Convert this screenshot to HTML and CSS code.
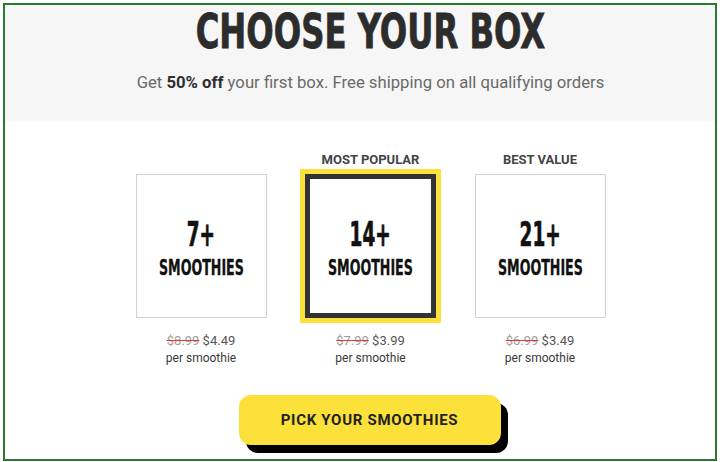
FILE: index.html
```html
<!DOCTYPE html>
<html lang="en">
<head>
<meta charset="utf-8">
<title>Choose your box</title>
<link rel="stylesheet" href="styles.css">
</head>
<body>
<div class="frame">
  <header class="hero">
    <h1 class="title"><span class="title-text">CHOOSE YOUR BOX</span></h1>
    <p class="subtitle">Get <strong>50% off</strong> your first box. Free shipping on all qualifying orders</p>
  </header>
  <main class="plans">
    <div class="plan-row">
      <div class="plan">
        <div class="badge"></div>
        <div class="card">
          <span class="count">7+</span>
          <span class="unit">SMOOTHIES</span>
        </div>
        <div class="price"><s class="old">$8.99</s> <span class="new">$4.49</span></div>
        <div class="per">per smoothie</div>
      </div>
      <div class="plan">
        <div class="badge">MOST POPULAR</div>
        <div class="card card-popular">
          <span class="count">14+</span>
          <span class="unit">SMOOTHIES</span>
        </div>
        <div class="price"><s class="old">$7.99</s> <span class="new">$3.99</span></div>
        <div class="per">per smoothie</div>
      </div>
      <div class="plan">
        <div class="badge">BEST VALUE</div>
        <div class="card">
          <span class="count">21+</span>
          <span class="unit">SMOOTHIES</span>
        </div>
        <div class="price"><s class="old">$6.99</s> <span class="new">$3.49</span></div>
        <div class="per">per smoothie</div>
      </div>
    </div>
    <button class="cta" type="button">PICK YOUR SMOOTHIES</button>
  </main>
</div>
</body>
</html>
```

FILE: styles.css
```css
* { box-sizing: border-box; }

html, body {
  margin: 0;
  padding: 0;
  background: #ffffff;
}

body {
  padding: 3px 3px 1px 3px;
  font-family: Roboto, "Liberation Sans", sans-serif;
}

.frame {
  border: 2px solid #2a7a30;
  height: 458px;
  overflow: hidden;
  background: #ffffff;
}

.hero {
  background: #f6f6f6;
  height: 116px;
  padding: 3px 0 0 21px;
  text-align: center;
}

.title {
  margin: 0;
  font-family: "DejaVu Sans Condensed", "DejaVu Sans", sans-serif;
  font-weight: 700;
  font-size: 47.5px;
  line-height: 48px;
  color: #2c2c2c;
  -webkit-text-stroke: 0.8px #2c2c2c;
}

.title-text {
  display: inline-block;
  transform: scaleX(0.755);
}

.subtitle {
  margin: 17px 0 0;
  font-size: 16.7px;
  line-height: 20px;
  color: #6a6a6a;
}

.subtitle strong {
  color: #2e2e2e;
  font-weight: 700;
}

.plans {
  padding: 31px 0 0 21px;
  display: flex;
  flex-direction: column;
  align-items: center;
}

.plan-row {
  display: flex;
  gap: 38.5px;
}

.plan {
  width: 131px;
  display: flex;
  flex-direction: column;
  align-items: center;
}

.badge {
  height: 16px;
  font-size: 13px;
  line-height: 16px;
  font-weight: 700;
  color: #444444;
  margin-bottom: 6px;
}

.card {
  width: 131px;
  height: 144px;
  border: 1px solid #d2d2d2;
  background: #fff;
  display: flex;
  flex-direction: column;
  align-items: center;
  justify-content: center;
  padding-top: 5px;
  font-family: "DejaVu Sans Condensed", "DejaVu Sans", sans-serif;
  font-weight: 700;
  color: #111111;
}

.card-popular {
  border: 5px solid #333333;
  box-shadow: 0 0 0 5px #fde13b;
}

.count {
  display: inline-block;
  font-size: 33px;
  line-height: 34px;
  transform: scaleX(0.62);
  -webkit-text-stroke: 0.7px #111111;
}

.unit {
  display: inline-block;
  margin-top: 4.5px;
  font-size: 21px;
  line-height: 22px;
  transform: scaleX(0.67);
  -webkit-text-stroke: 0.3px #111111;
}

.price {
  margin-top: 14px;
  font-size: 13px;
  line-height: 18px;
  color: #555555;
}

.old {
  color: #a0a0a0;
  text-decoration: line-through;
  text-decoration-color: #e0393a;
}

.per {
  font-size: 12px;
  line-height: 16px;
  color: #3a3a3a;
}

.cta {
  margin: 29px 0 0 -2px;
  width: 262px;
  height: 50px;
  border: 0;
  border-radius: 12px;
  background: #fde13b;
  box-shadow: 7px 8px 0 #000000;
  font-family: Roboto, "Liberation Sans", sans-serif;
  font-weight: 700;
  font-size: 15px;
  letter-spacing: 0.7px;
  color: #222222;
  padding: 0;
  cursor: pointer;
}
```
